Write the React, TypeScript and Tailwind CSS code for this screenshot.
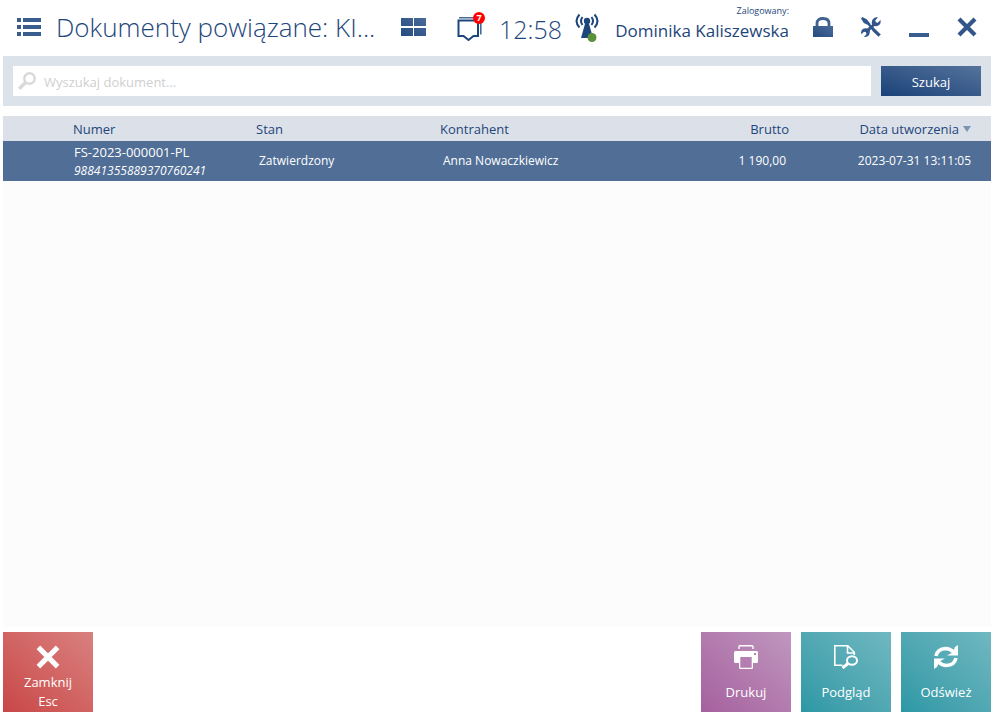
import React from "react";

const navy = "#1d467b";

function Defs() {
  return (
    <svg width="0" height="0" className="absolute" aria-hidden="true">
      <defs>
        <linearGradient id="navy" x1="0" y1="1" x2="1" y2="0">
          <stop offset="0" stopColor="#234b80" />
          <stop offset="1" stopColor="#4a6b98" />
        </linearGradient>
      </defs>
    </svg>
  );
}

const ListIcon = () => (
  <svg width="24" height="18" viewBox="0 0 24 18" fill="#3a5d8f" shapeRendering="crispEdges">
    {[0, 7, 14].map((y) => (
      <g key={y}>
        <rect x="0" y={y} width="4" height="4" />
        <rect x="6" y={y} width="18" height="4" />
      </g>
    ))}
  </svg>
);

const TilesIcon = () => (
  <svg width="25" height="18" viewBox="0 0 25 18" fill="url(#navy)">
    <path d="M0 0h12v8H0zM13 0h12v8H13zM0 10h12v8H0zM13 10h12v8H13z" />
  </svg>
);

const MessageIcon = () => (
  <svg width="26" height="26" viewBox="0 0 26 26" fill="none" stroke={navy}>
    <path d="M1.500 4.500h19.500v15.500h-4.500L11.500 24 6.500 20h-5z" strokeWidth="2" />
    <path d="M2 1.800h21.800v16.700" stroke="#4a6b98" strokeWidth="1.600" />
  </svg>
);

const SignalIcon = () => (
  <svg width="26" height="30" viewBox="0 0 26 30" fill="none" stroke={navy} strokeWidth="2">
    <circle cx="12" cy="8" r="3.200" fill={navy} stroke="none" />
    <path d="M10.500 9h3l4.500 16H6z" fill={navy} stroke="none" />
    <path d="M7.500 4q-3 4 0 8M16.500 4q3 4 0 8M4.500 1.500q-6 6.500 0 13M19.500 1.500q6 6.500 0 13" />
    <circle cx="17" cy="24.500" r="4.500" fill="#5b9138" stroke="none" />
  </svg>
);

const LockIcon = () => (
  <svg width="20" height="20" viewBox="0 0 20 20">
    <path d="M4 10V6.500C4 3 6.500 1.500 10 1.500S16 3 16 6.500V10" fill="none" stroke="#3f628f" strokeWidth="2.800" />
    <path d="M0 9h20v11H0z" fill="url(#navy)" />
  </svg>
);

const ToolsIcon = () => (
  <svg width="20" height="20" viewBox="0 0 20 20" fill="#32568a">
    <path d="M0 1.500L1.500 0 6 2.500 9.500 7 8 8.500 2.800 6z" />
    <path d="M7 8l1.500-1.500L19.800 17.500 17.500 19.800 12 14.500z" />
    <path d="M11 7.800q-1-5 2.500-7 1.500-.8 3.500-.3L14.300 3.200l.5 2 2 .5L19.500 3q.8 4-2 5.500-2 1-4 .5L8.800 13.500q.5 4.500-2.500 6-1.800.8-3.300.3L5.500 17.200l-.5-2-2-.5L.2 17.300q-.7-4 2-5.500 2-1 4-.3z" />
  </svg>
);

const CrossIcon = ({ size, color }: { size: number; color: string }) => (
  <svg width={size} height={size} viewBox="0 0 20 20" stroke={color} strokeWidth="4.200">
    <path d="M2 2l16 16M18 2L2 18" />
  </svg>
);

const SearchIcon = () => (
  <svg width="18" height="18" viewBox="0 0 18 18" fill="none" stroke="#d9d9d9">
    <circle cx="11.500" cy="6.500" r="5.200" strokeWidth="2.500" />
    <path d="M7.500 10.500L1.200 16.800" strokeWidth="3.400" />
  </svg>
);

const PrinterIcon = () => (
  <svg width="24" height="24" viewBox="0 0 24 24" fill="#fff">
    <path d="M5 4V1.500Q5 .7 6 .7h12q1 0 1 .8V4" fill="none" stroke="#fff" strokeWidth="1.400" />
    <path fillRule="evenodd" d="M1.500 6h21Q24 6 24 7.500v9q0 1.500-1.500 1.500H19v4.500q0 1.500-1.500 1.500h-11Q5 24 5 22.500V18H1.500Q0 18 0 16.500v-9Q0 6 1.500 6zM6.300 12v10.700h11.400V12zM20 8v2h2V8z" />
  </svg>
);

const PreviewIcon = () => (
  <svg width="24" height="24" viewBox="0 0 24 24" fill="none" stroke="#fff">
    <path d="M8.500 20.200H.8V.8h13l6.500 6.500V10M13.500 1v7h7" strokeWidth="1.600" />
    <ellipse cx="18" cy="15.500" rx="5" ry="4.300" strokeWidth="2" />
    <path d="M14 18.500l-5.500 4.500" strokeWidth="3" />
  </svg>
);

const RefreshIcon = () => (
  <svg width="24" height="24" viewBox="0 0 24 24">
    <path d="M2 11Q3.500 3.800 11.500 3.500q4.500 0 8 3.500" fill="none" stroke="#fff" strokeWidth="3.600" />
    <path d="M24 0v10.500H13l5.500-3L21 2z" fill="#fff" />
    <path d="M22 13q-1.500 7.200-9.500 7.500-4.500 0-8-3.500" fill="none" stroke="#fff" strokeWidth="3.600" />
    <path d="M0 24V13.500h11l-5.500 3L3 22z" fill="#fff" />
  </svg>
);

const tileBase =
  "flex h-20 w-[90px] flex-col items-center text-[13px] leading-[19px] text-white bg-linear-to-tr";

export default function App() {
  return (
    <div className="flex min-h-screen flex-col bg-white pr-[10px] pb-1 pl-[3px] font-['Open_Sans','Noto_Sans',sans-serif] text-[#1d467b]">
      <Defs />
      <header className="flex h-14 items-center pb-[2px] pl-[14px]">
        <button aria-label="Menu"><ListIcon /></button>
        <h1 className="ml-[15px] w-[322px] truncate text-[26px] leading-9 font-light">
          Dokumenty powiązane: KI...
        </h1>
        <button aria-label="Pulpit" className="ml-[23px]"><TilesIcon /></button>
        <button aria-label="Wiadomości" className="relative ml-[31px] mt-[3px]">
          <MessageIcon />
          <span className="absolute -top-1 left-4 size-3 rounded-full bg-[#f00] text-center text-[9px] leading-3 font-bold text-white">7</span>
        </button>
        <time className="ml-4 w-[62px] pt-1 text-[25px] leading-9 font-light">12:58</time>
        <span className="ml-[14px] pt-[2px]"><SignalIcon /></span>
        <div className="mb-1 ml-auto flex flex-col items-end whitespace-nowrap">
          <span className="text-[9px] leading-3">Zalogowany:</span>
          <span className="text-[17px] leading-7">Dominika Kaliszewska</span>
        </div>
        <div className="ml-6 flex items-center gap-7 pr-[14px]">
          <button aria-label="Zablokuj"><LockIcon /></button>
          <button aria-label="Narzędzia"><ToolsIcon /></button>
          <button aria-label="Minimalizuj" className="flex h-5 w-5 items-end"><span className="h-1 w-5 bg-[#3a5d8f]" /></button>
          <button aria-label="Zamknij okno"><CrossIcon size={20} color="#32568a" /></button>
        </div>
      </header>

      <form className="flex gap-[10px] bg-[#dce2ea] p-[10px]">
        <label className="flex h-[30px] flex-1 items-center gap-2 bg-white pl-[5px]">
          <SearchIcon />
          <input
            aria-label="Wyszukaj dokument"
            placeholder="Wyszukaj dokument..."
            className="flex-1 pt-[3px] text-[13px] outline-none placeholder:text-[#cfcfcf]"
          />
        </label>
        <button type="button" className="h-[30px] w-[100px] bg-linear-to-tr from-[#1a4278] to-[#55739c] pt-[3px] text-[13px] text-white">
          Szukaj
        </button>
      </form>

      <main className="mt-[10px] flex-1 bg-[#fcfcfc]">
        <table className="w-full table-fixed border-collapse text-[13px]">
          <colgroup>
            <col className="w-[70px]" />
            <col className="w-[183px]" />
            <col className="w-[184px]" />
            <col />
            <col className="w-[120px]" />
            <col className="w-[202px]" />
          </colgroup>
          <thead>
            <tr className="h-[25px] bg-[#dce1e9] text-left [&>th]:pt-[2px]">
              <th />
              <th className="font-normal">Numer</th>
              <th className="font-normal">Stan</th>
              <th className="font-normal">Kontrahent</th>
              <th className="text-right font-normal">Brutto</th>
              <th className="pr-5 font-normal">
                <span className="flex items-center justify-end gap-1">
                  Data utworzenia
                  <svg width="8" height="6" viewBox="0 0 8 6" fill="#7c94b3" className="mb-[2px]"><path d="M0 0h8L4 6z" /></svg>
                </span>
              </th>
            </tr>
          </thead>
          <tbody>
            <tr className="h-10 bg-[#506e96] text-[12px] text-white">
              <td />
              <td className="pl-px">
                <div className="text-[13px] leading-5">FS-2023-000001-PL</div>
                <div className="leading-[18px] italic">98841355889370760241</div>
              </td>
              <td className="pl-[3px]">Zatwierdzony</td>
              <td className="pl-[3px]">Anna Nowaczkiewicz</td>
              <td className="pr-[3px] text-right">1 190,00</td>
              <td className="pr-5 text-right">2023-07-31 13:11:05</td>
            </tr>
          </tbody>
        </table>
      </main>

      <footer className="mt-[5px] flex gap-[10px]">
        <button className={`${tileBase} mr-auto from-[#c84646] to-[#d98080] pt-[13px]`}>
          <CrossIcon size={24} color="#fff" />
          <span className="mt-1">Zamknij</span>
          <span>Esc</span>
        </button>
        <button className={`${tileBase} from-[#a5609e] to-[#bf97be] pt-[13px]`}>
          <PrinterIcon />
          <span className="mt-[14px]">Drukuj</span>
        </button>
        <button className={`${tileBase} from-[#2c98a5] to-[#6fb8c1] pt-[13px]`}>
          <PreviewIcon />
          <span className="mt-[14px]">Podgląd</span>
        </button>
        <button className={`${tileBase} from-[#2c98a5] to-[#6fb8c1] pt-[13px]`}>
          <RefreshIcon />
          <span className="mt-[14px]">Odśwież</span>
        </button>
      </footer>
    </div>
  );
}
